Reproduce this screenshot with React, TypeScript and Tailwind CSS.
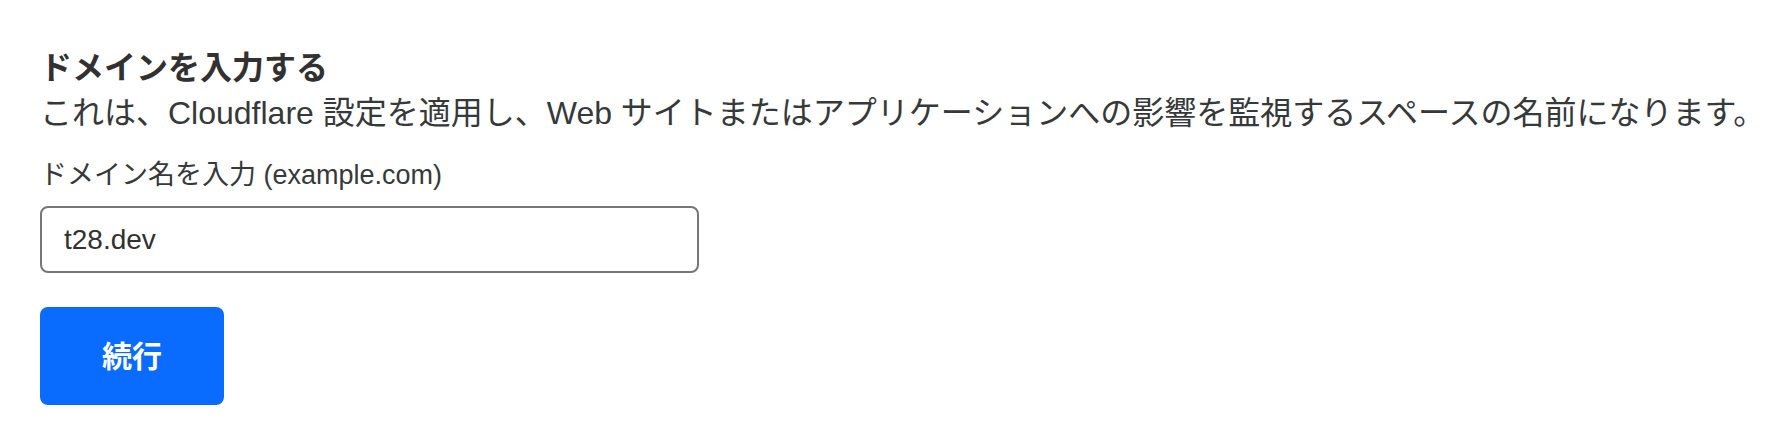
export default function App() {
  return (
    <div
      className="min-h-screen bg-white pl-10 pt-[46px] text-[#313131]"
      style={{ fontFamily: '"Liberation Sans", "Noto Sans CJK JP", sans-serif' }}
    >
      {/* Header */}
      <h2 className="text-[32px] leading-[45px] font-bold text-[#313131]">ドメインを入力する</h2>
      <p className="text-[32px] leading-[45px] whitespace-nowrap text-[#36393a]">
        これは、Cloudflare 設定を適用し、Web サイトまたはアプリケーションへの影響を監視するスペースの名前になります。
      </p>

      {/* Domain field */}
      <label htmlFor="domain" className="mt-[19px] block text-[27px] leading-[40px] text-[#36393a]">
        ドメイン名を入力 (example.com)
      </label>
      <input
        id="domain"
        type="text"
        value="t28.dev"
        readOnly
        className="mt-[11px] block h-[67px] w-[659px] rounded-[8px] border-2 border-[#767676] bg-white pl-[22px] pr-4 text-[28px] text-[#313131] outline-none"
      />

      <button
        type="button"
        className="mt-[34px] block h-[98px] w-[184px] rounded-[8px] bg-[#0a6cff] text-[30px] font-semibold text-white"
      >
        続行
      </button>
    </div>
  );
}
